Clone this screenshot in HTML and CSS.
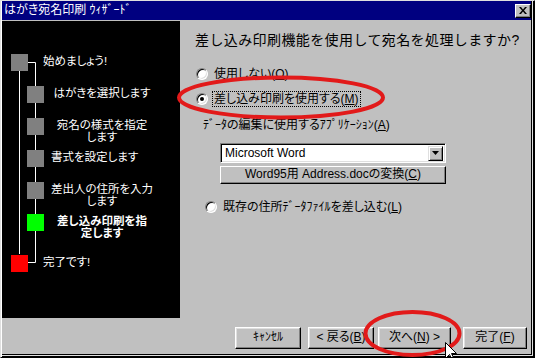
FILE: index.html
```html
<!DOCTYPE html>
<html lang="ja">

<head>
  <meta charset="UTF-8">
  <title>はがき宛名印刷 ウィザード</title>
  <link rel="stylesheet" href="styles.css">
</head>

<body>
  <div class="window">
    <div class="titlebar">
      <span class="title">はがき宛名印刷 ｳｨｻﾞｰﾄﾞ</span>
      <span class="close">
        <svg width="8" height="7" viewBox="0 0 8 7"><path d="M0 0h2l2 2.5L6 0h2L5 3.5 8 7H6L4 4.5 2 7H0l3-3.5z" fill="#000"/></svg>
      </span>
    </div>

    <div class="body">
      <!-- step tree -->
      <div class="sidebar">
        <svg class="tree-lines" width="178" height="297">
          <path d="M17.5 50V233M26 41.5H33.5V241.5H26" stroke="#fff" fill="none"/>
        </svg>
        <ul class="steps">
          <li class="step step-top">
            <span class="box"></span>
            <span class="step-label">始めましょう!</span>
          </li>
          <li class="step">
            <span class="box"></span>
            <span class="step-label">はがきを選択します</span>
          </li>
          <li class="step">
            <span class="box"></span>
            <span class="step-label">宛名の様式を指定<br>します</span>
          </li>
          <li class="step">
            <span class="box"></span>
            <span class="step-label step-left">書式を設定します</span>
          </li>
          <li class="step">
            <span class="box"></span>
            <span class="step-label">差出人の住所を入力<br>します</span>
          </li>
          <li class="step step-current">
            <span class="box"></span>
            <span class="step-label">差し込み印刷を指<br>定します</span>
          </li>
          <li class="step step-top step-end">
            <span class="box"></span>
            <span class="step-label">完了です!</span>
          </li>
        </ul>
      </div>

      <div class="panel">
        <h1>差し込み印刷機能を使用して宛名を処理しますか?</h1>

        <div class="option option-first">
          <span class="radio"></span>
          <span class="option-label">使用しない(<u>O</u>)</span>
        </div>
        <div class="option">
          <span class="radio checked"></span>
          <span class="option-label focus">差し込み印刷を使用する(<u>M</u>)</span>
        </div>

        <div class="app-group">
          <div class="app-label">ﾃﾞｰﾀの編集に使用するｱﾌﾟﾘｹｰｼｮﾝ(<u>A</u>)</div>
          <div class="combo">
            <span class="combo-text">Microsoft Word</span>
            <span class="combo-arrow">
              <svg width="7" height="4" viewBox="0 0 7 4"><path d="M0 0h7L3.5 4z" fill="#000"/></svg>
            </span>
          </div>
          <div class="wide-button">Word95用 Address.docの変換(<u>C</u>)</div>
        </div>

        <div class="option option-last">
          <span class="radio"></span>
          <span class="option-label">既存の住所ﾃﾞｰﾀﾌｧｲﾙを差し込む(<u>L</u>)</span>
        </div>
      </div>
    </div>

    <div class="footer">
      <div class="btn btn-cancel">ｷｬﾝｾﾙ</div>
      <div class="btn btn-back">&lt; 戻る(<u>B</u>)</div>
      <div class="btn btn-next">次へ(<u>N</u>) &gt;</div>
      <div class="btn btn-finish">完了(<u>F</u>)</div>
    </div>

    <!-- red marker circles and mouse pointer drawn over the dialog -->
    <svg class="marks" width="535" height="358">
      <ellipse cx="281" cy="97.5" rx="102" ry="20" fill="none" stroke="#e21a1a" stroke-width="4"/>
      <ellipse cx="412.5" cy="333.5" rx="47" ry="21.5" fill="none" stroke="#e21a1a" stroke-width="4"/>
      <path d="M445.5 342.5v16l4-4 3 6 2-1-3-6h5z" fill="#fff" stroke="#000"/>
    </svg>
  </div>
</body>

</html>
```

FILE: styles.css
```css
* {
  box-sizing: border-box;
}

body {
  margin: 0;
  background: #c0c0c0;
  font-family: "Liberation Sans", "Noto Sans CJK JP", sans-serif;
  font-size: 12px;
  font-feature-settings: "palt";
  color: #000;
}

u {
  text-decoration: underline;
  text-underline-offset: 1px;
}

.window {
  position: relative;
  width: 535px;
  height: 358px;
  display: flex;
  flex-direction: column;
  overflow: hidden;
  background: #c0c0c0;
  border: 1px solid;
  border-color: #dfdfdf #000 #000 #dfdfdf;
  padding: 0 3px 2px 1px;
  box-shadow: inset 1px 0 #fff, inset -1px -1px #000, inset -2px -2px #dfdfdf, inset -3px -3px #000;
}

.titlebar {
  height: 19px;
  display: flex;
  align-items: center;
  justify-content: space-between;
  padding-left: 2px;
  background: #000080;
  color: #fff;
}

.title {
  line-height: 19px;
}

.close {
  width: 16px;
  height: 14px;
  display: flex;
  align-items: center;
  justify-content: center;
  background: #c0c0c0;
  border: 1px solid;
  border-color: #fff #000 #000 #fff;
  box-shadow: inset -1px -1px #808080;
}

.body {
  height: 297px;
  margin-top: 1px;
  display: flex;
}

/* left step tree */
.sidebar {
  position: relative;
  width: 178px;
  background: #000;
  color: #fff;
}

.tree-lines {
  position: absolute;
  left: 0;
  top: 0;
}

.steps {
  position: relative;
  list-style: none;
  margin: 0;
  padding: 33px 0 0 0;
}

.step {
  height: 32px;
  display: flex;
  align-items: flex-start;
  padding-left: 25px;
}

.step .box {
  width: 17px;
  height: 17px;
  flex: none;
  background: #808080;
}

.step-label {
  width: 112px;
  margin-left: 2px;
  text-align: center;
  white-space: nowrap;
  font-size: 11.5px;
  line-height: 12px;
  padding-top: 1px;
}

.step-left {
  text-align: left;
  padding-left: 5px;
}

.step-top {
  padding-left: 9px;
}

.step-top .step-label {
  width: auto;
  margin-left: 15px;
  text-align: left;
}

.step-current .box {
  background: #00ff00;
}

.step-current .step-label {
  font-weight: bold;
}

.step-end {
  margin-top: 9px;
}

.step-end .box {
  background: #ff0000;
}

/* right panel */
.panel {
  flex: 1;
  padding: 10px 0 0 0;
}

.panel h1 {
  margin: 0 0 0 15px;
  font-size: 14px;
  font-weight: normal;
  line-height: 18px;
  letter-spacing: 0.4px;
  font-feature-settings: normal;
}

.option {
  height: 16px;
  display: flex;
  align-items: center;
  margin-top: 9px;
  padding-left: 16px;
}

.option-first {
  margin-top: 17px;
}

.option-last {
  margin-top: 15px;
  padding-left: 25px;
}

.radio {
  position: relative;
  width: 12px;
  height: 12px;
  flex: none;
  border-radius: 50%;
  background: #fff;
  border: 1px solid;
  border-color: #808080 #fff #fff #808080;
  box-shadow: inset 1px 1px #000, inset -1px -1px #dfdfdf;
}

.radio.checked::after {
  content: "";
  position: absolute;
  left: 3px;
  top: 3px;
  width: 4px;
  height: 4px;
  border-radius: 50%;
  background: #000;
}

.option-label {
  margin-left: 4px;
  padding: 0 1px;
  line-height: 14px;
  border: 1px dotted transparent;
}

.option-label.focus {
  border-color: #000;
}

.app-group {
  margin-top: 12px;
  padding-left: 40px;
}

.app-label {
  margin-left: -17px;
  line-height: 12px;
}

.combo {
  width: 226px;
  height: 20px;
  margin-top: 12px;
  display: flex;
  align-items: center;
  padding: 2px 2px 2px 4px;
  background: #fff;
  border: 1px solid;
  border-color: #808080 #fff #fff #808080;
  box-shadow: inset 1px 1px #000, inset -1px -1px #dfdfdf;
}

.combo-text {
  flex: 1;
}

.combo-arrow {
  width: 15px;
  height: 15px;
  display: flex;
  align-items: center;
  justify-content: center;
  background: #c0c0c0;
  border: 1px solid;
  border-color: #dfdfdf #000 #000 #dfdfdf;
  box-shadow: inset 1px 1px #fff, inset -1px -1px #808080;
}

.wide-button {
  width: 226px;
  height: 18px;
  margin-top: 3px;
  text-align: center;
  line-height: 15px;
  background: #c0c0c0;
  border: 1px solid;
  border-color: #fff #000 #000 #fff;
  box-shadow: inset -1px -1px #808080;
}

/* bottom buttons */
.footer {
  flex: 1;
  display: flex;
  justify-content: flex-end;
  align-items: flex-start;
  padding: 9px 4px 0 0;
}

.btn {
  width: 66px;
  height: 22px;
  text-align: center;
  line-height: 19px;
  background: #c0c0c0;
  border: 1px solid;
  border-color: #fff #000 #000 #fff;
  box-shadow: inset -1px -1px #808080, inset 1px 1px #dfdfdf;
}

.btn-back {
  margin-left: 7px;
}

.btn-next {
  width: 73px;
  margin-left: 4px;
}

.btn-finish {
  width: 64px;
  margin-left: 12px;
}

.marks {
  position: absolute;
  left: -1px;
  top: -1px;
  pointer-events: none;
}
```
